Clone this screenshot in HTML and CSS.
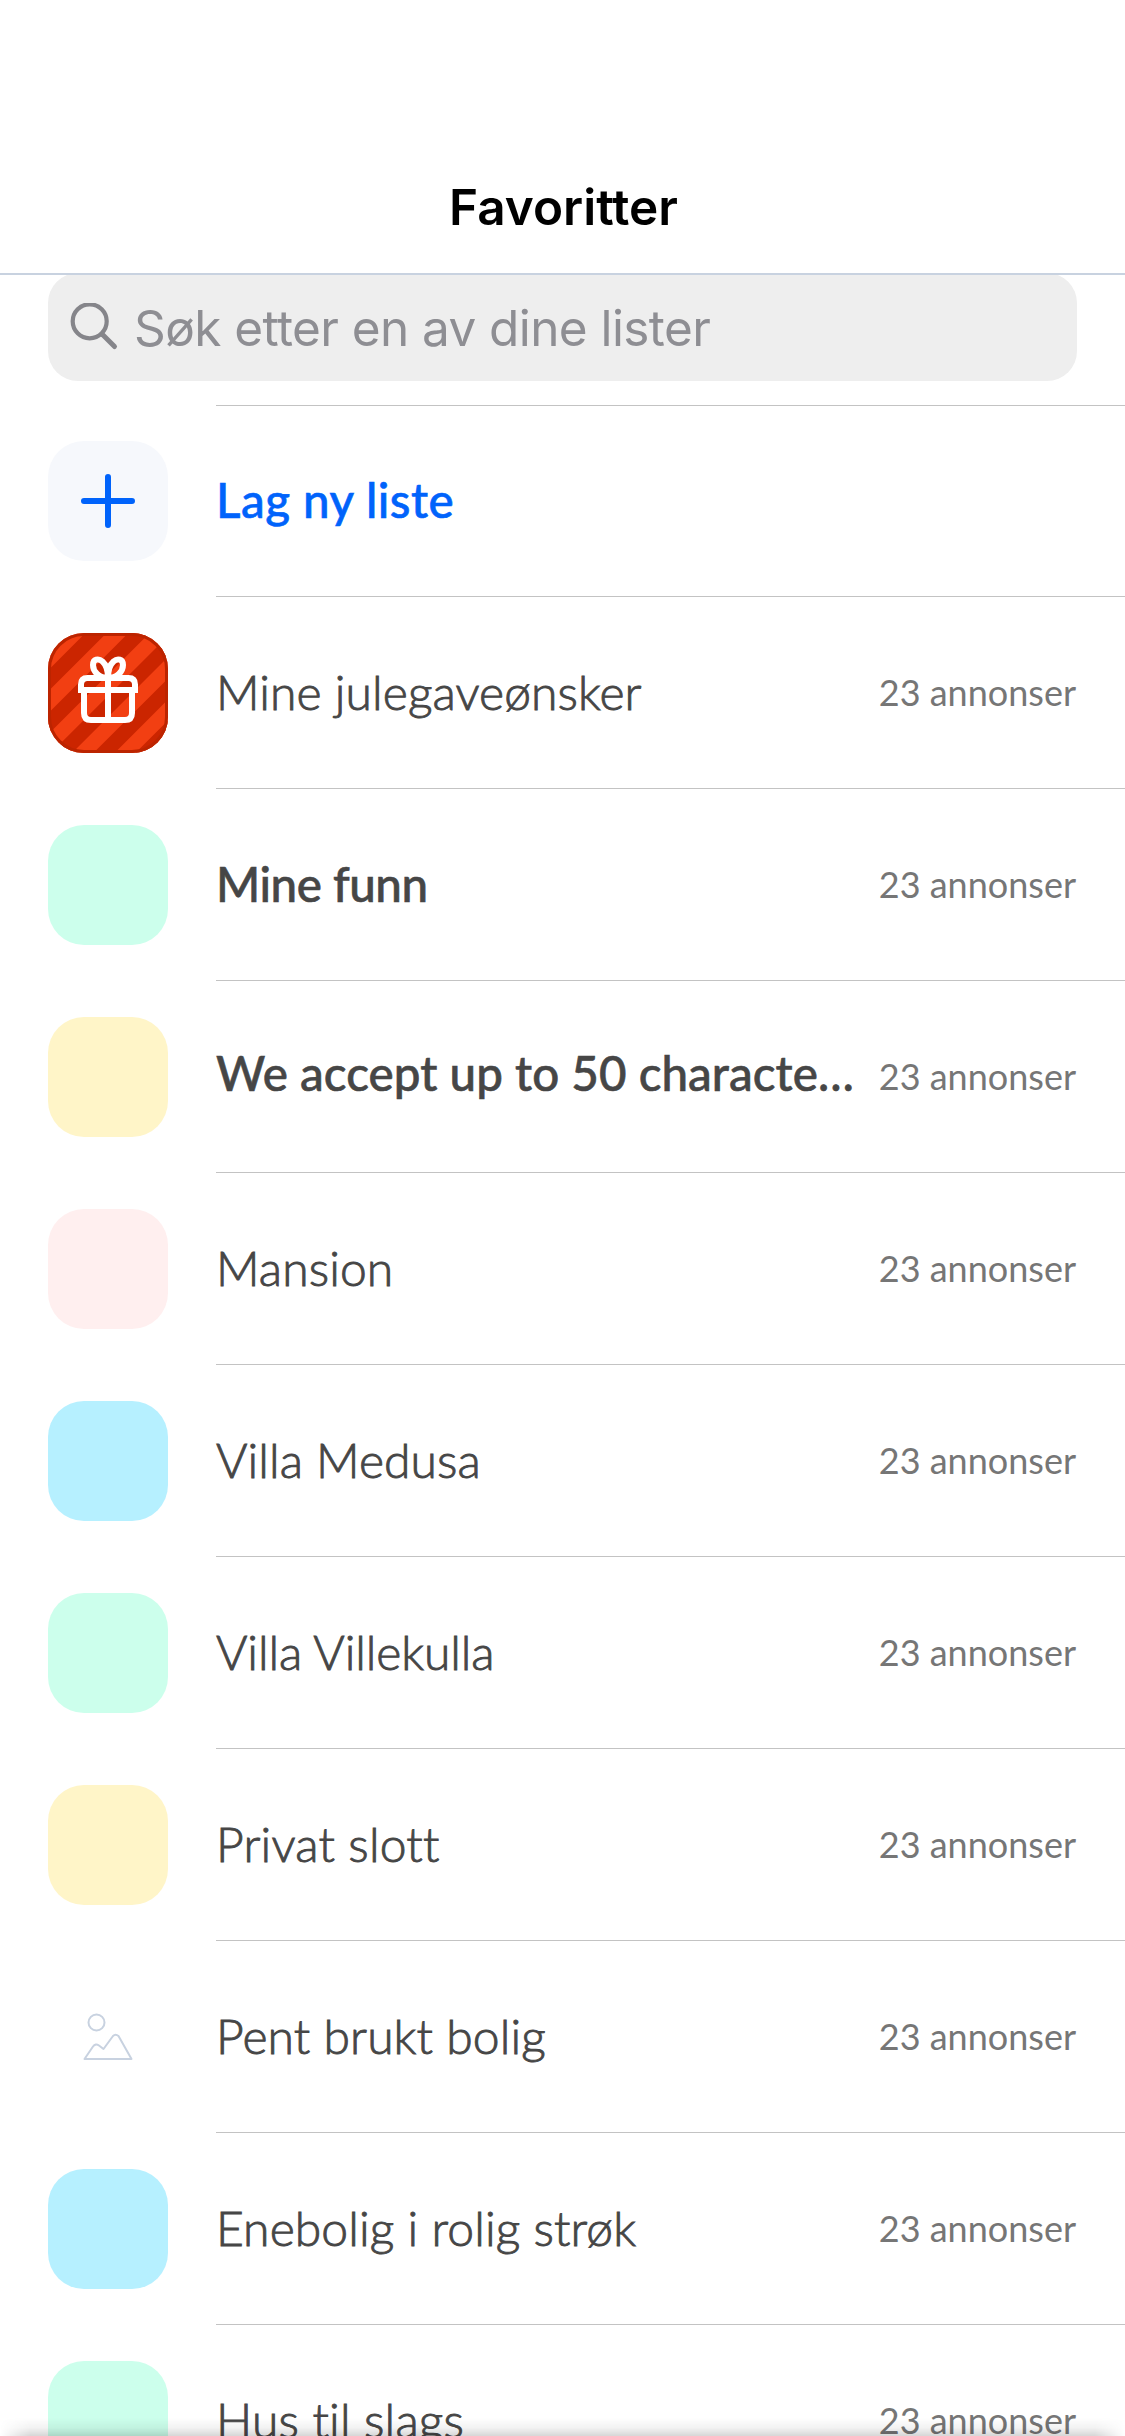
FILE: index.html
```html
<!DOCTYPE html>
<html lang="nb">
<head>
<meta charset="utf-8">
<title>Favoritter</title>
<link rel="stylesheet" href="styles.css">
</head>
<body>
<div class="screen">
  <header class="navbar"><h1 class="title">Favoritter</h1></header>
  <div class="search-area">
    <div class="search">
      <svg class="search-icon" width="50" height="50" viewBox="0 0 50 50"><circle cx="20.700" cy="18.300" r="17" /><path class="handle" d="M33.500 31.500L45.500 43.500" /></svg>
      <span class="placeholder">Søk etter en av dine lister</span>
    </div>
  </div>
  <ul class="list">
    <li class="row create">
      <div class="thumb add"><svg width="120" height="120" viewBox="0 0 120 120"><path d="M60 36V84M36 60H84" /></svg></div>
      <div class="body"><span class="name medium wide">Lag ny liste</span></div>
    </li>
    <li class="row">
      <div class="thumb"><svg width="120" height="120" viewBox="0 0 120 120">
        <defs><clipPath id="tile"><rect width="120" height="120" rx="36" /></clipPath></defs>
        <g clip-path="url(#tile)">
          <rect width="120" height="120" fill="#f23f12" />
          <path class="stripes" d="M-10 58L58 -10M-10 101L101 -10M-10 143.500L143.500 -10M-10 186L186 -10M20 198L198 20" />
        </g>
        <rect class="tile-edge" x="1.500" y="1.500" width="117" height="117" rx="34.500" />
        <g class="gift">
          <path d="M33 60V51.500Q33 45 39.500 45H80.500Q87 45 87 51.500V60M30 57H90M36 57V80Q36 87 43 87H77Q84 87 84 80V57M60 42V87" />
          <path d="M60 45C51 45 45 38.500 45 32C45 26 50.500 25 54.500 28.500C58.500 32 60 37 60 45C60 37 61.500 32 65.500 28.500C69.500 25 75 26 75 32C75 38.500 69 45 60 45Z" />
        </g>
      </svg></div>
      <div class="body"><span class="name julegave">Mine julegaveønsker</span><span class="count">23 annonser</span></div>
    </li>
    <li class="row"><div class="thumb mint"></div><div class="body"><span class="name medium tight">Mine funn</span><span class="count">23 annonser</span></div></li>
    <li class="row"><div class="thumb cream"></div><div class="body"><span class="name medium long">We accept up to 50 characte…</span><span class="count">23 annonser</span></div></li>
    <li class="row"><div class="thumb rose"></div><div class="body"><span class="name mansion">Mansion</span><span class="count">23 annonser</span></div></li>
    <li class="row"><div class="thumb sky"></div><div class="body"><span class="name">Villa Medusa</span><span class="count">23 annonser</span></div></li>
    <li class="row"><div class="thumb mint"></div><div class="body"><span class="name villekulla">Villa Villekulla</span><span class="count">23 annonser</span></div></li>
    <li class="row"><div class="thumb cream"></div><div class="body"><span class="name slott">Privat slott</span><span class="count">23 annonser</span></div></li>
    <li class="row">
      <div class="thumb empty"><svg width="120" height="120" viewBox="0 0 120 120"><circle cx="48.500" cy="45.500" r="8" /><path d="M36.500 82L45 69.500Q47.500 66 51 68.500L55.500 72L65 59Q67.500 56.500 70.500 59L83.500 82Z" /></svg></div>
      <div class="body"><span class="name bolig">Pent brukt bolig</span><span class="count">23 annonser</span></div>
    </li>
    <li class="row"><div class="thumb sky"></div><div class="body"><span class="name bolig">Enebolig i rolig strøk</span><span class="count">23 annonser</span></div></li>
    <li class="row"><div class="thumb mint"></div><div class="body"><span class="name slott">Hus til slags</span><span class="count">23 annonser</span></div></li>
  </ul>
  <div class="sheet-shadow"></div>
</div>
</body>
</html>
```
FILE: styles.css
```css
* { box-sizing: border-box; }
body { margin: 0; background: #fff; font-family: Lato, "Liberation Sans", sans-serif; }
svg { display: block; fill: none; }

.screen { position: relative; width: 1125px; height: 2436px; overflow: hidden; background: #fff; }

.navbar { position: relative; z-index: 1; height: 275px; padding-top: 139px; border-bottom: 2px solid #c8d2e0; display: flex; justify-content: center; }
.title { margin: 0; padding-left: 2px; font: 600 49.5px/136px Inter, sans-serif; color: #000; }

.search-area { height: 133px; margin-top: -2px; padding: 0 48px; position: relative; }
.search-area::after { content: ""; position: absolute; left: 216px; right: 0; bottom: 0; height: 1px; background: #c3c3c3; }
.search { height: 108px; padding: 2px 0 0 21px; border-radius: 30px; background: #eee; display: flex; align-items: center; }
.search-icon { stroke: #85858a; stroke-width: 4.2; stroke-linecap: round; flex: none; }
.handle { stroke-width: 5; }
.placeholder { margin-left: 15px; font: 400 49.5px/60px Inter, sans-serif; letter-spacing: -0.58px; color: #8e8e93; white-space: nowrap; }

.list { margin: 0; padding: 0; list-style: none; }
.row { height: 192px; padding-left: 48px; display: flex; align-items: center; gap: 48px; }
.row.create { height: 191px; }
.create .thumb { margin-bottom: 1px; }

.thumb { width: 120px; height: 120px; border-radius: 36px; flex: none; }
.add { background: #f6f8fc; }
.add path { stroke: #0063fb; stroke-width: 6; stroke-linecap: round; }
.mint { background: #ccffec; }
.cream { background: #fff5c8; }
.rose { background: #ffefef; }
.sky { background: #b6f0ff; }
.empty path, .empty circle { stroke: #c8d2e0; stroke-width: 2; stroke-linejoin: round; }
.stripes { stroke: #cb2500; stroke-width: 15; }
.tile-edge { stroke: #bc2400; stroke-width: 3; }
.gift { stroke: #fff; stroke-width: 6; stroke-linejoin: round; }

.body { flex: 1; height: 100%; padding: 1px 49px 0 0; border-bottom: 1px solid #c3c3c3; display: flex; align-items: center; justify-content: space-between; }
.name { padding-bottom: 3px; font-size: 48px; font-weight: 300; line-height: 58px; color: #464646; white-space: nowrap; letter-spacing: 0.07px; -webkit-text-stroke: 0.9px #464646; }
.medium { font-size: 47.5px; font-weight: 500; -webkit-text-stroke-width: 0.6px; }
.wide { letter-spacing: 0.5px; color: #0063fb; -webkit-text-stroke-color: #0063fb; }
.tight { letter-spacing: -0.45px; }
.long { padding-bottom: 9px; letter-spacing: 0.07px; }
.julegave { letter-spacing: 0.1px; }
.mansion { letter-spacing: 0.1px; }
.villekulla { letter-spacing: -0.1px; }
.slott { letter-spacing: 0.2px; }
.bolig { letter-spacing: 0.12px; }
.count { padding-bottom: 3px; font-size: 36px; line-height: 44px; color: #767676; white-space: nowrap; }

.sheet-shadow { position: absolute; left: 0; right: 0; bottom: 0; height: 18px; background: linear-gradient(to bottom, rgba(0,0,0,0), rgba(0,0,0,.05) 55%, rgba(0,0,0,.16)); -webkit-mask-image: linear-gradient(to right, transparent, #000 30px, #000 calc(100% - 30px), transparent); mask-image: linear-gradient(to right, transparent, #000 30px, #000 calc(100% - 30px), transparent); }
```
